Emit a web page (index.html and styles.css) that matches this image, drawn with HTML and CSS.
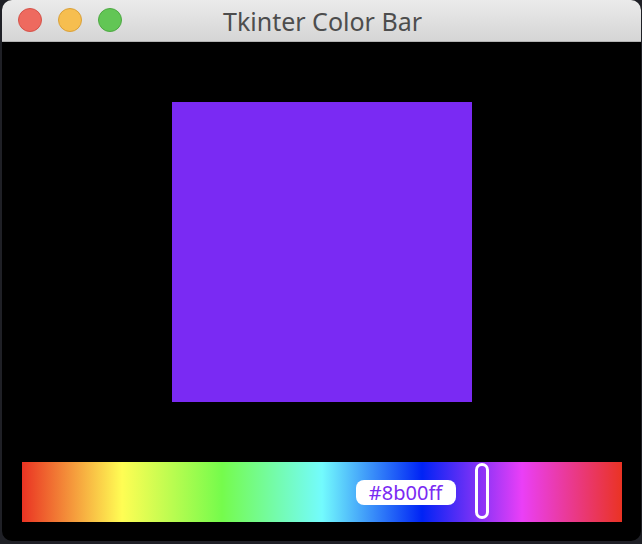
FILE: index.html
```html
<!DOCTYPE html>
<html>
<head>
<meta charset="utf-8">
<link rel="stylesheet" href="styles.css">
</head>
<body>
<div class="window">
  <div class="titlebar">
    <div class="lights">
      <span class="light red"></span>
      <span class="light yellow"></span>
      <span class="light green"></span>
    </div>
    <div class="title">Tkinter Color Bar</div>
  </div>
  <div class="content">
    <div class="swatch"></div>
    <div class="bar">
      <div class="label">#8b00ff</div>
      <div class="handle"></div>
    </div>
  </div>
</div>
</body>
</html>
```
FILE: styles.css
```css
html, body {
  margin: 0;
  padding: 0;
  background: #1f2026;
  width: 642px;
  height: 544px;
  overflow: hidden;
}
.window {
  margin-left: 2px;
  width: 639px;
  height: 541px;
  border-radius: 10px;
  overflow: hidden;
  background: #000;
  display: flex;
  flex-direction: column;
}
.titlebar {
  position: relative;
  height: 41px;
  flex: none;
  background: linear-gradient(#ebebeb, #d5d5d5);
  border-bottom: 1px solid #b4b4b4;
  display: flex;
  align-items: center;
  justify-content: center;
}
.lights {
  position: absolute;
  left: 16px;
  top: 8px;
  display: flex;
  gap: 16px;
}
.light {
  width: 22px;
  height: 22px;
  border-radius: 50%;
  border: 1px solid rgba(0,0,0,0.12);
}
.red { background: #ee6a5f; border-color: #d4534a; }
.yellow { background: #f6be4f; border-color: #d9a03a; }
.green { background: #62c655; border-color: #4ea843; }
.title {
  font-family: "Noto Sans", "Liberation Sans", sans-serif;
  font-size: 25px;
  color: #4d4d4d;
  margin-left: 2px;
}
.content {
  flex: 1;
  display: flex;
  flex-direction: column;
  align-items: center;
  padding-top: 60px;
  gap: 60px;
}
.swatch {
  width: 300px;
  height: 300px;
  background: #7a2af3;
}
.bar {
  position: relative;
  width: 600px;
  height: 60px;
  background: linear-gradient(to right,
    #ea3323 0%,
    #fffd54 16.667%,
    #75fb4c 33.333%,
    #73fbfd 50%,
    #0023f5 66.667%,
    #ea3ff7 83.333%,
    #ea3323 100%);
}
.label {
  position: absolute;
  left: 334px;
  top: 18px;
  width: 100px;
  height: 25px;
  border-radius: 8px;
  background: #fff;
  color: #7a2af3;
  font-family: "Noto Sans", "Liberation Sans", sans-serif;
  font-size: 20px;
  line-height: 25px;
  text-align: center;
}
.handle {
  position: absolute;
  left: 453px;
  top: 1px;
  width: 8px;
  height: 50px;
  border: 3px solid #fff;
  border-radius: 7px;
}
```
